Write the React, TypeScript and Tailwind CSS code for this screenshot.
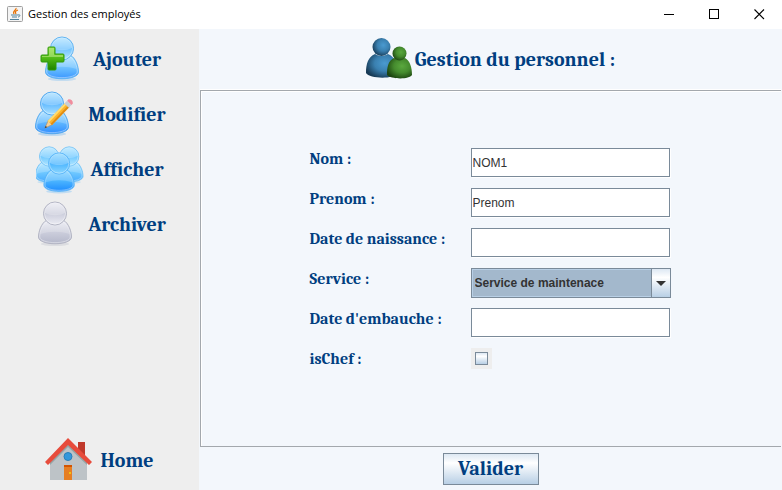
import React from 'react';

function PersonShape({ fill, stroke }: { fill: string; stroke: string }) {
  return (
    <>
      <ellipse cx="24" cy="43" rx="14" ry="2" fill={stroke} opacity="0.3" />
      <path
        d="M16 19 C10 22 7.500 31 7.500 36 C7.500 45 40.500 45 40.500 36 C40.500 31 38 22 32 19 Z"
        fill={`url(#${fill}-body)`}
        stroke={stroke}
        strokeWidth="1"
      />
      <path
        d="M16.500 20.500 C11 23 8.700 31 8.700 36 C9.500 43.500 38.500 43.500 39.300 36 C39.300 31 37 23 31.500 20.500"
        fill="none"
        stroke="#fff"
        strokeOpacity="0.4"
      />
      <path d="M9.500 33 C10.500 26 13 22 17 20 L31 20 C35 22 37.500 26 38.500 33 C29 30 19 30 9.500 33 Z" fill="#fff" opacity="0.2" />
      <circle cx="24" cy="12.500" r="11.500" fill={`url(#${fill}-head)`} stroke={stroke} strokeWidth="1" />
      <circle cx="24" cy="12.500" r="10.500" fill="none" stroke="#fff" strokeOpacity="0.4" />
      <path d="M14 12 C14.500 -0.500 33.500 -0.500 34 12 C28 15 20 15 14 12 Z" fill="#fff" opacity="0.25" />
    </>
  );
}

function Gradients({ id, light, mid, dark }: { id: string; light: string; mid: string; dark: string }) {
  return (
    <>
      <linearGradient id={`${id}-head`} x1="0" y1="0" x2="0" y2="1">
        <stop offset="0" stopColor={light} />
        <stop offset="0.5" stopColor={mid} />
        <stop offset="1" stopColor={light} />
      </linearGradient>
      <linearGradient id={`${id}-body`} x1="0" y1="0" x2="0" y2="1">
        <stop offset="0" stopColor={light} />
        <stop offset="0.5" stopColor={mid} />
        <stop offset="1" stopColor={dark} />
      </linearGradient>
    </>
  );
}

function AddIcon() {
  return (
    <svg viewBox="0 0 48 48" className="size-12 shrink-0" aria-hidden="true">
      <defs>
        <Gradients id="add" light="#b5e5ff" mid="#70c3ff" dark="#3a97ff" />
        <linearGradient id="plus" x1="0" y1="0" x2="0" y2="1">
          <stop offset="0" stopColor="#8fdc42" />
          <stop offset="0.5" stopColor="#4fb916" />
          <stop offset="1" stopColor="#1d8200" />
        </linearGradient>
      </defs>
      <PersonShape fill="add" stroke="#62b4f2" />
      <path
        d="M10 12 Q10 11 11 11 H16 Q17 11 17 12 V18 H25 Q26 18 26 19 V25 Q26 26 25 26 H18 V33 Q18 34 17 34 H11 Q10 34 10 33 V26 H4 Q3 26 3 25 V20 Q3 19 4 19 H10 Z"
        fill="url(#plus)"
        stroke="#2f9a0c"
        strokeLinejoin="round"
      />
      <path d="M11 12 H16 V19 H25 V21 H4 V20 H11 Z" fill="#c9f29a" opacity="0.5" />
    </svg>
  );
}

function EditIcon() {
  return (
    <svg viewBox="0 0 48 48" className="size-12 shrink-0" aria-hidden="true">
      <defs>
        <Gradients id="edit" light="#aee2ff" mid="#62baff" dark="#2f8cff" />
      </defs>
      <g transform="translate(-5 0)">
        <PersonShape fill="edit" stroke="#55a9ee" />
      </g>
      <g transform="rotate(44 12 37)">
        <path d="M9 29 L12 37 L15 29 Z" fill="#f3cf9a" stroke="#b98a4a" strokeWidth="0.5" />
        <path d="M11 35 L12 37.500 L13 35 Z" fill="#444" />
        <rect x="9" y="5" width="6" height="25" fill="#fdb52c" />
        <rect x="9" y="5" width="2" height="25" fill="#ffdc72" />
        <rect x="13" y="5" width="2" height="25" fill="#e18c13" />
        <rect x="9" y="2" width="6" height="4" fill="#c9ced4" />
        <path d="M9 2 V0 Q12 -3 15 0 V2 Z" fill="#f08d9d" />
      </g>
    </svg>
  );
}

function GroupIcon() {
  return (
    <svg viewBox="0 0 48 48" className="size-12 shrink-0" aria-hidden="true">
      <defs>
        <Gradients id="group" light="#8fd8ff" mid="#4db6ff" dark="#1e8cff" />
        <Gradients id="back" light="#b4e6ff" mid="#72caff" dark="#45aaff" />
      </defs>
      <g transform="translate(-7 0) scale(.84)">
        <PersonShape fill="back" stroke="#6cc0f6" />
      </g>
      <g transform="translate(13 0) scale(.84)">
        <PersonShape fill="back" stroke="#6cc0f6" />
      </g>
      <g transform="translate(1 6) scale(.92)">
        <PersonShape fill="group" stroke="#58b4f8" />
      </g>
    </svg>
  );
}

function ArchiveIcon() {
  return (
    <svg viewBox="0 0 48 48" className="size-12 shrink-0" aria-hidden="true">
      <defs>
        <Gradients id="archive" light="#ececf4" mid="#cccedc" dark="#b4b7ca" />
      </defs>
      <g transform="translate(-2 0)">
        <PersonShape fill="archive" stroke="#b3b5c4" />
      </g>
    </svg>
  );
}

function HomeIcon() {
  return (
    <svg viewBox="0 0 48 48" className="size-12 shrink-0" aria-hidden="true">
      <rect x="33" y="5" width="7" height="18" fill="#c0392b" />
      <path d="M5 22 L23 5 L42 22 V43 H5 Z" fill="#bdc3c7" />
      <path d="M5 28 L23 10 L42 28 V22 L23 3 L5 22 Z" fill="#95a5a6" />
      <path d="M0 25 L23 1 L47 25 L44 28 L23 8 L3 28 Z" fill="#e74c3c" />
      <circle cx="23" cy="19.500" r="4" fill="#3498db" stroke="#2980b9" />
      <rect x="19" y="28" width="8" height="15" fill="#e67e22" />
      <rect x="19" y="28" width="8" height="2" fill="#d35400" />
      <rect x="24" y="35" width="2" height="2" fill="#f1c40f" />
    </svg>
  );
}

function StaffIcon() {
  return (
    <svg viewBox="0 0 48 48" className="size-12 shrink-0" aria-hidden="true">
      <defs>
        <radialGradient id="blue" cx="0.6" cy="0.4" r="0.65">
          <stop offset="0" stopColor="#4a9ad0" />
          <stop offset="0.5" stopColor="#3a80b0" />
          <stop offset="1" stopColor="#173a55" />
        </radialGradient>
        <radialGradient id="green" cx="0.6" cy="0.4" r="0.65">
          <stop offset="0" stopColor="#5aa83e" />
          <stop offset="0.5" stopColor="#458b2e" />
          <stop offset="1" stopColor="#1c4510" />
        </radialGradient>
      </defs>
      <path d="M9 18 C2 21 0 28 0 37 C3 43 28 43 31 38 C32 28 29 21 22 18 Q15 22 9 18 Z" fill="url(#blue)" />
      <circle cx="15.500" cy="11" r="9" fill="url(#blue)" />
      <path d="M28 22 C22 25 21 31 21 39 C24 43 43 44 46 39 C46 31 44 25 39 22 Q33 25 28 22 Z" fill="url(#green)" />
      <circle cx="33.500" cy="17.500" r="7" fill="url(#green)" />
    </svg>
  );
}

function JavaIcon() {
  return (
    <svg viewBox="0 0 16 16" className="size-4" aria-hidden="true">
      <rect x="0.500" y="0.500" width="15" height="15" rx="1" fill="#f4f4f4" stroke="#a0a0a0" />
      <path d="M9 2 C10 4 5 5 7 8 M11 4 C8 5 8 6 9 8" fill="none" stroke="#e76f00" strokeWidth="1.2" />
      <path d="M4 9 H11 M5 11 H10 M3 13.500 H12 M11 9 C14 8 13 11 11 11" fill="none" stroke="#53829b" />
    </svg>
  );
}

const menu = [
  { label: 'Ajouter', icon: <AddIcon /> },
  { label: 'Modifier', icon: <EditIcon /> },
  { label: 'Afficher', icon: <GroupIcon /> },
  { label: 'Archiver', icon: <ArchiveIcon /> },
];

function MenuButton({ label, icon }: { label: string; icon: React.ReactNode }) {
  return (
    <button type="button" className="flex h-[55px] w-full items-center justify-center gap-[7px] text-xl font-bold">
      {icon}
      {label}
    </button>
  );
}

const fieldClass =
  'h-[29px] w-[199px] border border-[#7a8a99] bg-white px-px font-["Liberation_Sans",Arial,sans-serif] text-xs text-[#333333] shadow-[1px_1px_0_#ffffff] outline-none';

function Row({ id, label, children }: { id: string; label: string; children: React.ReactNode }) {
  return (
    <div className="flex h-[30px] items-start">
      <label htmlFor={id} className="w-[161px] shrink-0 text-base leading-[22px] font-bold whitespace-nowrap">
        {label}
      </label>
      {children}
    </div>
  );
}

export default function App() {
  return (
    <div className='flex min-h-screen flex-col bg-[#f3f7fc] font-[Cambria,"DejaVu_Serif_Condensed","DejaVu_Serif",serif] text-[#003e80]'>
      <header className='flex h-[29px] items-center bg-white pb-px pl-[7px] font-["Open_Sans","Segoe_UI",sans-serif] text-[11px] text-black'>
        <JavaIcon />
        <h1 className="ml-[5px] flex-1">Gestion des employés</h1>
        <button type="button" aria-label="Réduire" className="flex h-[27px] w-[45px] items-center justify-center">
          <svg viewBox="0 0 11 11" className="size-[11px]" shapeRendering="crispEdges">
            <path d="M0 5.500 H10" stroke="#000" />
          </svg>
        </button>
        <button type="button" aria-label="Agrandir" className="flex h-[27px] w-[45px] items-center justify-center">
          <svg viewBox="0 0 11 11" className="size-[11px]" shapeRendering="crispEdges">
            <rect x="0.500" y="0.500" width="9" height="9" fill="none" stroke="#000" />
          </svg>
        </button>
        <button type="button" aria-label="Fermer" className="flex h-[27px] w-[45px] items-center justify-center">
          <svg viewBox="0 0 11 11" className="size-[11px]">
            <path d="M0.500 0.500 L10 10 M10 0.500 L0.500 10" stroke="#000" strokeWidth="1.100" />
          </svg>
        </button>
      </header>

      <div className="flex flex-1">
        <nav className="flex w-[199px] shrink-0 flex-col bg-[#eeeeee] pt-[3px] pb-[2px]">
          {menu.map((item) => (
            <MenuButton key={item.label} label={item.label} icon={item.icon} />
          ))}
          <div className="mt-auto">
            <MenuButton label="Home" icon={<HomeIcon />} />
          </div>
        </nav>

        <main className="flex flex-1 flex-col">
          <div className="flex h-[61px] items-center justify-center gap-px">
            <StaffIcon />
            <h2 className="text-xl font-bold">Gestion du personnel :</h2>
          </div>

          <form className="flex flex-1 flex-col">
            <div className="mr-px ml-px flex flex-1 justify-center border-t border-b border-l border-[#a3a8ad] pt-[57px] pr-[2px] shadow-[0_-1px_0_#ffffff,inset_1px_1px_0_#ffffff]">
              <div className="flex flex-col gap-[10px]">
                <Row id="nom" label="Nom :">
                  <input id="nom" type="text" defaultValue="NOM1" className={fieldClass} />
                </Row>
                <Row id="prenom" label="Prenom :">
                  <input id="prenom" type="text" defaultValue="Prenom" className={fieldClass} />
                </Row>
                <Row id="naissance" label="Date de naissance :">
                  <input id="naissance" type="text" className={fieldClass} />
                </Row>
                <Row id="service" label="Service :">
                  <div className="relative w-[200px]">
                    <select
                      id="service"
                      className='h-[30px] w-full appearance-none border border-[#7a8a99] bg-[#a3b8cc] px-[3px] font-["Liberation_Sans",Arial,sans-serif] text-xs font-bold text-[#333333] shadow-[inset_0_0_0_1px_#b8cfe5] outline-none'
                    >
                      <option>Service de maintenace</option>
                    </select>
                    <span className="pointer-events-none absolute inset-y-px right-px flex w-[19px] items-center justify-center border-l border-[#7a8a99] bg-linear-to-b from-[#dde8f3] via-white via-30% to-[#b8cfe5]">
                      <svg viewBox="0 0 10 5" className="h-[5px] w-[10px]" aria-hidden="true">
                        <path d="M0 0 H10 L5 5 Z" fill="#333333" />
                      </svg>
                    </span>
                  </div>
                </Row>
                <Row id="embauche" label="Date d'embauche :">
                  <input id="embauche" type="text" className={fieldClass} />
                </Row>
                <Row id="chef" label="isChef :">
                  <span className="flex size-[21px] items-center justify-center bg-[#eeeeee]">
                    <input
                      id="chef"
                      type="checkbox"
                      className="size-[13px] appearance-none border border-[#7a8a99] bg-linear-to-b from-[#dde8f3] via-white via-30% to-[#b8cfe5]"
                    />
                  </span>
                </Row>
              </div>
            </div>
            <div className="flex h-[43px] items-center justify-center">
              <button
                type="submit"
                className="h-8 w-24 border border-[#7a8a99] bg-linear-to-b from-[#dde8f3] via-white via-30% to-[#b8cfe5] text-xl leading-none font-bold"
              >
                Valider
              </button>
            </div>
          </form>
        </main>
      </div>
    </div>
  );
}
